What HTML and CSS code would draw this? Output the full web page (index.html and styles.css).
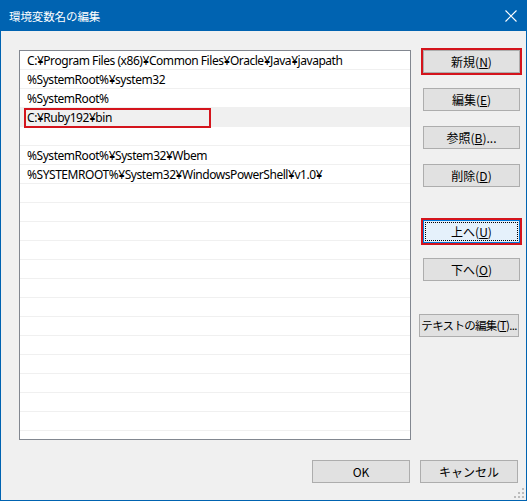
FILE: index.html
```html
<!DOCTYPE html>
<html lang="ja">
<head>
<meta charset="utf-8">
<title>環境変数名の編集</title>
<link rel="stylesheet" href="styles.css">
</head>
<body>
<div class="window">
  <div class="titlebar">
    <span class="title">環境変数名の編集</span>
    <svg class="close" width="12" height="12" viewBox="0 0 12 12"><path d="M0.5 0.5 L11.5 11.5 M11.5 0.5 L0.5 11.5" stroke="#fff" stroke-width="1.1" fill="none"/></svg>
  </div>
  <div class="body">
    <div class="main">
      <div class="list">
        <div class="row">C:¥Program Files (x86)¥Common Files¥Oracle¥Java¥javapath</div>
        <div class="row">%SystemRoot%¥system32</div>
        <div class="row">%SystemRoot%</div>
        <div class="row selected">C:¥Ruby192¥bin</div>
        <div class="row"></div>
        <div class="row">%SystemRoot%¥System32¥Wbem</div>
        <div class="row">%SYSTEMROOT%¥System32¥WindowsPowerShell¥v1.0¥</div>
        <div class="row"></div>
        <div class="row"></div>
        <div class="row"></div>
        <div class="row"></div>
        <div class="row"></div>
        <div class="row"></div>
        <div class="row"></div>
        <div class="row"></div>
        <div class="row"></div>
        <div class="row"></div>
        <div class="row"></div>
        <div class="row"></div>
        <div class="row"></div>
        <div class="row"></div>
        <div class="row"></div>
        <div class="mark"></div>
      </div>
      <div class="side">
        <button class="btn marked">新規(<u>N</u>)</button>
        <button class="btn">編集(<u>E</u>)</button>
        <button class="btn">参照(<u>B</u>)...</button>
        <button class="btn">削除(<u>D</u>)</button>
        <button class="btn focus marked gap">上へ(<u>U</u>)</button>
        <button class="btn">下へ(<u>O</u>)</button>
        <button class="btn wide gap">テキストの編集(<u>T</u>)...</button>
      </div>
    </div>
    <div class="footer">
      <button class="btn">OK</button>
      <button class="btn">キャンセル</button>
    </div>
    <svg class="grip" width="12" height="12" viewBox="0 0 12 12">
      <rect x="9" y="1" width="2" height="2" fill="#bcbcbc"/>
      <rect x="5" y="5" width="2" height="2" fill="#bcbcbc"/>
      <rect x="9" y="5" width="2" height="2" fill="#bcbcbc"/>
      <rect x="1" y="9" width="2" height="2" fill="#bcbcbc"/>
      <rect x="5" y="9" width="2" height="2" fill="#bcbcbc"/>
      <rect x="9" y="9" width="2" height="2" fill="#bcbcbc"/>
    </svg>
  </div>
</div>
</body>
</html>
```

FILE: styles.css
```css
* { box-sizing: border-box; }
html, body { margin: 0; padding: 0; }
body {
  width: 527px;
  height: 501px;
  overflow: hidden;
  font-family: "Noto Sans", "Noto Sans CJK JP", sans-serif;
  font-size: 12px;
  color: #000;
}
.window {
  width: 527px;
  height: 501px;
  background: #0063b1;
  padding: 0 1px 1px 1px;
  display: flex;
  flex-direction: column;
}
.titlebar {
  height: 31px;
  flex: none;
  display: flex;
  align-items: center;
  justify-content: space-between;
  padding: 0 10px 0 9px;
  margin: 0 -1px;
  background: #0063b1;
}
.title {
  color: #fff;
  font-family: "Noto Sans CJK JP", sans-serif;
  font-size: 11.5px;
  letter-spacing: -0.1px;
}
.close { display: block; margin-top: 1px; }
.body {
  flex: 1;
  background: #f0f0f0;
  position: relative;
  padding: 19px 6px 0 18px;
  display: flex;
  flex-direction: column;
}
.main {
  display: flex;
  gap: 12px;
}
.list {
  position: relative;
  width: 392px;
  height: 390px;
  border: 1px solid #828790;
  background: #fff;
  overflow: hidden;
  flex: none;
}
.row {
  height: 19px;
  line-height: 18px;
  padding-top: 1px;
  border-bottom: 1px solid #f0f0f0;
  padding-left: 7px;
  white-space: nowrap;
  font-size: 12px;
  letter-spacing: -0.45px;
}
.row.selected { background: #f0f0f0; }
.mark {
  position: absolute;
  left: 4px;
  top: 57px;
  width: 187px;
  height: 20px;
  border: 2px solid #d4141c;
}
.side {
  display: flex;
  flex-direction: column;
  align-items: flex-start;
  width: 97px;
}
.btn {
  height: 23px;
  width: 97px;
  margin: 0 0 15px 0;
  padding: 0;
  border: 1px solid #adadad;
  background: #e1e1e1;
  font-family: "Noto Sans CJK JP", sans-serif;
  font-size: 12px;
  color: #000;
  line-height: 21px;
  text-align: center;
  white-space: nowrap;
}
.btn u { text-decoration-thickness: 1px; text-underline-offset: 1px; }
.btn.gap { margin-top: 18px; }
.btn.wide {
  width: 100px;
  margin-left: -4px;
  font-size: 11.5px;
  letter-spacing: -0.7px;
}
.btn.marked { box-shadow: 0 0 0 2px #d4141c; }
.btn.focus {
  background: #e5f1fb;
  border-color: #0078d7;
  outline: 1px dotted #000;
  outline-offset: -3px;
}
.footer {
  display: flex;
  justify-content: flex-end;
  gap: 10px;
  margin-top: 20px;
  padding-right: 2px;
}
.footer .btn { width: 98px; margin: 0; }
.grip {
  position: absolute;
  right: 1px;
  bottom: 1px;
}
```
